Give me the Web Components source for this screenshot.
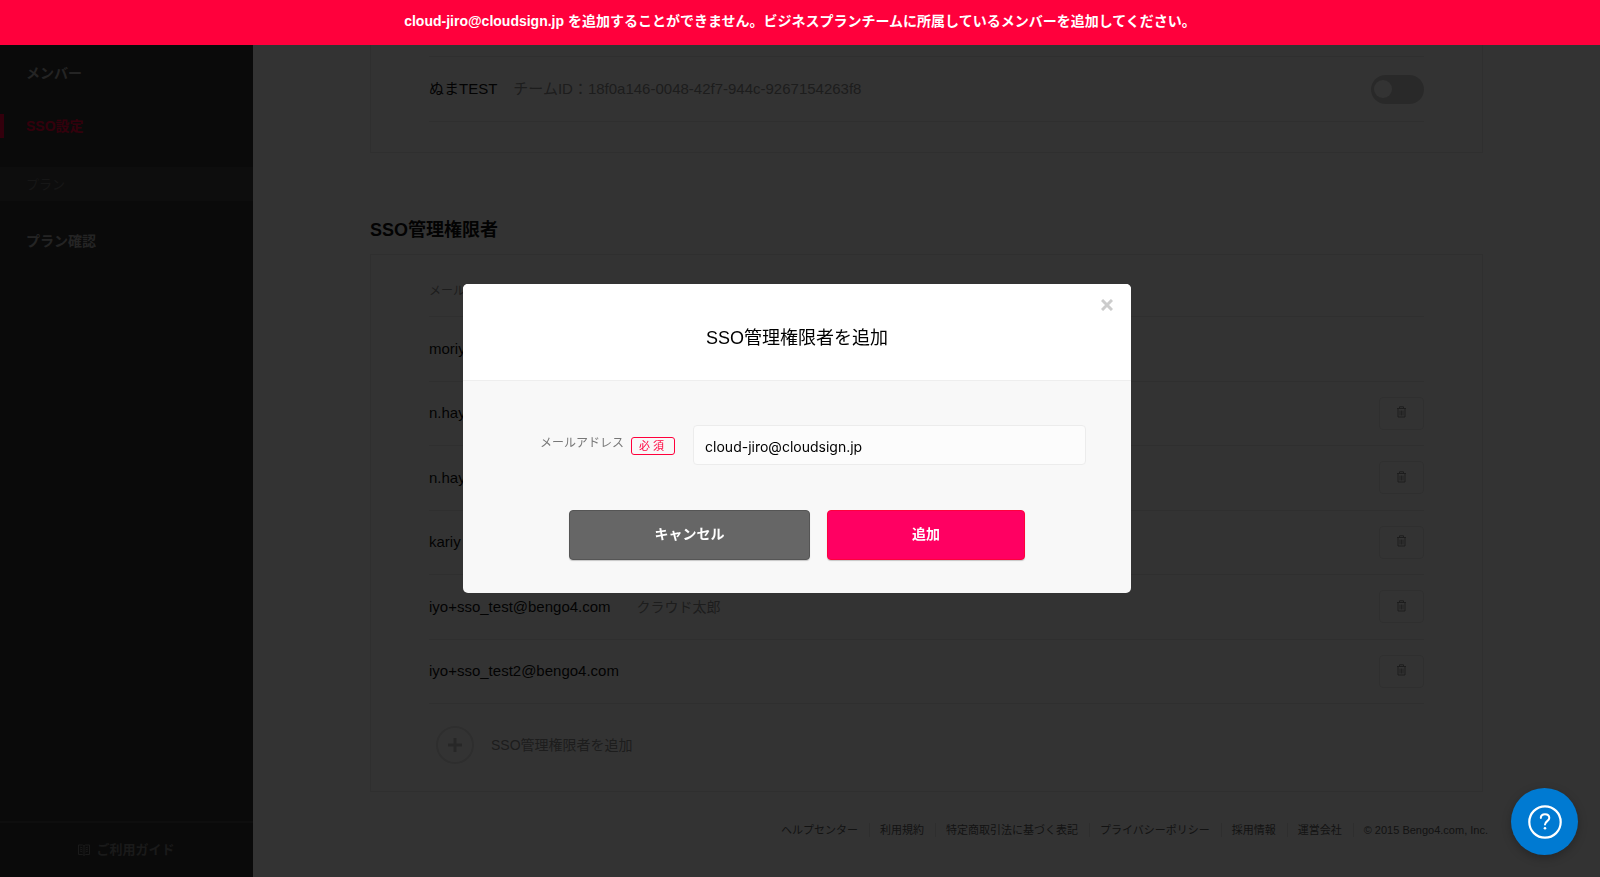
<!DOCTYPE html>
<html lang="ja">
<head>
  <meta charset="UTF-8">
  <meta name="viewport" content="width=device-width, initial-scale=1.0">
  <title>SSO設定</title>
  <style>
    body {
      margin: 0;
      font-family: "Liberation Sans", "Noto Sans CJK JP", sans-serif;
      font-size: 15px;
      line-height: 24px;
      color: #111;
      background-color: #fff;
    }
  </style>
</head>
<body>
  <sso-page></sso-page>

  <script>
    class ErrorBanner extends HTMLElement {
      constructor() {
        super();
        this.attachShadow({ mode: "open" });
      }

      connectedCallback() {
        this.shadowRoot.innerHTML = /* html */`
        <style>
          :host {
            display: block;
            position: relative;
            z-index: 20;
            padding: 9px 16px 12px;
            background-color: #ff003c;
            color: #fff;
            font-size: 14px;
            font-weight: 700;
            text-align: center;
          }
        </style>
        <div role="alert"><slot></slot></div>`;
      }
    }

    class SideNav extends HTMLElement {
      constructor() {
        super();
        this.attachShadow({ mode: "open" });
      }

      static get styles() {
        return /* css */`
          :host {
            display: flex;
            flex-direction: column;
            width: 253px;
            flex-shrink: 0;
            background-color: #323232;
            font-size: 14px;
            font-weight: 700;
          }

          nav {
            flex: 1;
            padding-top: 16px;
          }

          a {
            display: block;
            color: #b4b4b4;
            text-decoration: none;
          }

          .item {
            padding: 0 26px;
            margin-bottom: 29px;
          }

          .active {
            padding-left: 22px;
            border-left: 4px solid #ff003c;
            color: #ff003c;
          }

          .group {
            margin: 0 0 28px;
            padding: 6px 26px 4px;
            background-color: #414141;
            color: #707070;
            font-size: 13px;
            font-weight: 400;
            line-height: 24px;
          }

          .guide {
            display: flex;
            justify-content: center;
            align-items: center;
            gap: 6px;
            padding: 15px 0;
            border-top: 2px solid #484848;
            color: #808080;
            font-size: 13px;
          }
        `;
      }

      connectedCallback() {
        this.shadowRoot.innerHTML = /* html */`
        <style>${SideNav.styles}</style>
        <nav>
          <a href="#members" class="item">メンバー</a>
          <a href="#sso" class="item active">SSO設定</a>
          <h2 class="group">プラン</h2>
          <a href="#plan" class="item">プラン確認</a>
        </nav>
        <a href="#guide" class="guide">
          <svg width="12" height="12" viewBox="0 0 12 12" fill="none" stroke="currentColor" aria-hidden="true">
            <path d="M.5 1H4.5L6 2 7.5 1H11.5V10.5H7.5L6 11.5 4.5 10.5H.5ZM6 2V11M2 3L4.5 4M2 5L4.5 6M2 7L4.5 8M10 3L7.5 4M10 5L7.5 6M10 7L7.5 8"/>
          </svg>
          ご利用ガイド
        </a>`;
      }
    }

    class PageCard extends HTMLElement {
      constructor() {
        super();
        this.attachShadow({ mode: "open" });
      }

      connectedCallback() {
        this.shadowRoot.innerHTML = /* html */`
        <style>
          :host {
            display: block;
            padding: 0 58px;
            border: 1px solid #e9e9e9;
          }
        </style>
        <slot></slot>`;
      }
    }

    class ToggleSwitch extends HTMLElement {
      constructor() {
        super();
        this.attachShadow({ mode: "open" });
      }

      connectedCallback() {
        this.shadowRoot.innerHTML = /* html */`
        <style>
          :host {
            display: flex;
          }

          input {
            appearance: none;
            display: flex;
            align-items: center;
            box-sizing: border-box;
            width: 53px;
            height: 29px;
            margin: 0;
            padding: 0 3px;
            border-radius: 15px;
            background-color: #ccc;
          }
          input::before {
            content: "";
            width: 18px;
            height: 18px;
            border-radius: 50%;
            background-color: #fcfcfc;
          }
          input:checked {
            justify-content: flex-end;
            background-color: #ff003c;
          }
        </style>
        <input type="checkbox" role="switch" aria-label="${this.getAttribute("label")}">`;
      }
    }

    class MemberRow extends HTMLElement {
      constructor() {
        super();
        this.attachShadow({ mode: "open" });
      }

      static get styles() {
        return /* css */`
          :host {
            display: flex;
            align-items: center;
            justify-content: space-between;
            border-bottom: 1px solid #eaeaea;
          }

          .text {
            display: flex;
            align-items: center;
            gap: var(--row-gap, 26px);
          }

          .sub {
            color: #909090;
            font-size: var(--sub-size, 14px);
          }

          button {
            display: flex;
            justify-content: center;
            align-items: center;
            width: 45px;
            height: 33px;
            padding: 0 0 2px;
            border: 1px solid #e8e8e8;
            border-radius: 4px;
            background-color: #fff;
            color: #909090;
          }
        `;
      }

      connectedCallback() {
        const remove = this.hasAttribute("removable") ? /* html */`
          <button type="button" aria-label="削除">
            <svg width="9" height="12" viewBox="0 0 9 12" fill="none" stroke="currentColor" aria-hidden="true">
              <path d="M0 2.5H9M2.5 2V.8H6.5V2M1 3V11H8V3"/>
              <path stroke-width=".8" d="M3 4.5V9.5M4.5 4.5V9.5M6 4.5V9.5"/>
            </svg>
          </button>` : "";

        this.shadowRoot.innerHTML = /* html */`
        <style>${MemberRow.styles}</style>
        <div class="text">
          <span>${this.getAttribute("name")}</span>
          <span class="sub">${this.getAttribute("sub") || ""}</span>
        </div>
        <slot></slot>
        ${remove}`;
      }
    }

    class AddButton extends HTMLElement {
      constructor() {
        super();
        this.attachShadow({ mode: "open" });
      }

      connectedCallback() {
        this.shadowRoot.innerHTML = /* html */`
        <style>
          :host {
            display: block;
            padding: 22px 7px 27px;
          }

          button {
            display: flex;
            align-items: center;
            gap: 17px;
            padding: 0;
            border: 0;
            background: none;
            color: #909090;
            font: inherit;
            font-size: 14px;
          }
        </style>
        <button type="button">
          <svg width="38" height="38" viewBox="0 0 38 38" fill="none" aria-hidden="true">
            <circle cx="19" cy="19" r="18" stroke="#e4e4e4" stroke-width="2"/>
            <path d="M19 12V26M12 19H26" stroke="#c4c4c4" stroke-width="3"/>
          </svg>
          <slot></slot>
        </button>`;
      }
    }

    class SiteFooter extends HTMLElement {
      constructor() {
        super();
        this.attachShadow({ mode: "open" });
      }

      connectedCallback() {
        const links = ["ヘルプセンター", "利用規約", "特定商取引法に基づく表記", "プライバシーポリシー", "採用情報", "運営会社"];
        this.shadowRoot.innerHTML = /* html */`
        <style>
          :host {
            display: flex;
            justify-content: flex-end;
            padding: 31px 112px 0 0;
            font-size: 11px;
            line-height: 14px;
            color: #606060;
          }

          a {
            margin-right: 10px;
            padding-right: 11px;
            border-right: 1px solid #e4e4e4;
            color: inherit;
            text-decoration: none;
          }

          small {
            font-size: inherit;
          }
        </style>
        ${links.map((text) => `<a href="#">${text}</a>`).join("")}
        <small>© 2015 Bengo4.com, Inc.</small>`;
      }
    }

    class AddDialog extends HTMLElement {
      constructor() {
        super();
        this.attachShadow({ mode: "open" });
      }

      static get styles() {
        return /* css */`
          :host {
            position: fixed;
            inset: 0;
            z-index: 10;
            display: flex;
            justify-content: center;
            align-items: center;
            padding-right: 6px;
            background-color: rgba(0, 0, 0, 0.8);
          }

          .dialog {
            position: relative;
            width: 668px;
            border-radius: 5px;
            background-color: #f8f8f8;
            overflow: hidden;
          }

          h1 {
            margin: 0;
            padding: 42px 0 30px;
            border-bottom: 1px solid #eee;
            background-color: #fff;
            color: #000;
            font-size: 18px;
            font-weight: 400;
            text-align: center;
          }

          .close {
            position: absolute;
            top: 15px;
            right: 18px;
            display: flex;
            padding: 0;
            border: 0;
            background: none;
          }

          form {
            padding: 44px 45px 33px 77px;
          }

          .field {
            display: flex;
            align-items: center;
            gap: 18px;
          }

          label {
            display: flex;
            align-items: flex-start;
            gap: 7px;
            color: #777;
            font-size: 12px;
            line-height: 16px;
          }

          .required {
            margin-top: 2px;
            padding: 0 10px 0 7px;
            border: 1px solid #ff003c;
            border-radius: 3px;
            color: #ff003c;
            font-size: 11px;
          }

          input {
            flex: 1;
            min-width: 0;
            box-sizing: border-box;
            height: 40px;
            padding: 3px 11px 0;
            border: 1px solid #ececec;
            border-radius: 4px;
            background-color: #fcfcfc;
            color: #000;
            font-family: Inter, sans-serif;
            font-size: 14px;
          }

          /* the pair of buttons is centred on the dialog, not on the padded form */
          .actions {
            display: flex;
            justify-content: center;
            gap: 17px;
            margin: 45px 0 0 -32px;
          }

          .actions button {
            width: 198px;
            height: 50px;
            padding: 0 0 2px;
            border: 1px solid #ff003c;
            border-radius: 4px;
            background-color: #ff0062;
            box-shadow: 0 1px 1px rgba(0, 0, 0, 0.2);
            color: #fff;
            font: inherit;
            font-size: 14px;
            font-weight: 700;
          }
          .actions .cancel {
            width: 241px;
            border-color: #555;
            background-color: #666;
          }
        `;
      }

      connectedCallback() {
        this.shadowRoot.innerHTML = /* html */`
        <style>${AddDialog.styles}</style>
        <div class="dialog" role="dialog" aria-labelledby="title">
          <h1 id="title">SSO管理権限者を追加</h1>
          <button type="button" class="close" aria-label="閉じる">
            <svg width="12" height="12" viewBox="0 0 12 12" stroke="#ccc" stroke-width="3" aria-hidden="true">
              <path d="M1 1L11 11M11 1L1 11"/>
            </svg>
          </button>
          <form>
            <div class="field">
              <label for="mail">メールアドレス<span class="required">必 須</span></label>
              <input id="mail" type="text" value="cloud-jiro@cloudsign.jp">
            </div>
            <div class="actions">
              <button type="button" class="cancel">キャンセル</button>
              <button type="button">追加</button>
            </div>
          </form>
        </div>`;
      }
    }

    class HelpButton extends HTMLElement {
      constructor() {
        super();
        this.attachShadow({ mode: "open" });
      }

      connectedCallback() {
        this.shadowRoot.innerHTML = /* html */`
        <style>
          :host {
            position: fixed;
            right: 22px;
            bottom: 22px;
            z-index: 30;
          }

          button {
            display: flex;
            justify-content: center;
            align-items: center;
            width: 67px;
            height: 67px;
            padding: 0;
            border: 0;
            border-radius: 50%;
            background-color: #007ad2;
            box-shadow: 0 3px 10px rgba(0, 0, 0, 0.25);
          }
        </style>
        <button type="button" aria-label="ヘルプ">
          <svg width="34" height="34" viewBox="0 0 34 34" fill="none" stroke="#fff" aria-hidden="true">
            <circle cx="17" cy="17" r="15.7" stroke-width="2.2"/>
            <path stroke-width="2" stroke-linecap="round" d="M12.8 12.9C12.9 10.5 14.6 9.3 17 9.3S21.3 10.7 21.3 13C21.3 15.9 17 16.4 17 19.6"/>
            <circle cx="17" cy="23.3" r="1.3" fill="#fff" stroke="none"/>
          </svg>
        </button>`;
      }
    }

    class SsoPage extends HTMLElement {
      constructor() {
        super();
        this.attachShadow({ mode: "open" });
      }

      static get styles() {
        return /* css */`
          :host {
            display: flex;
            flex-direction: column;
            min-height: 100vh;
          }

          .layout {
            display: flex;
            flex: 1;
          }

          .content {
            flex: 1;
            min-width: 0;
          }

          main {
            padding: 0 117px;
          }

          .teams {
            padding-top: 11px;
            padding-bottom: 30px;
            border-top: 0;
          }
          .teams member-row {
            --row-gap: 16px;
            --sub-size: 15px;
            height: 64px;
            border-top: 1px solid #eaeaea;
          }

          h2 {
            margin: 65px 0 12px;
            font-size: 18px;
            font-weight: 700;
          }

          .head {
            padding: 24px 0 13px;
            border-bottom: 1px solid #eaeaea;
            color: #909090;
            font-size: 12px;
          }

          .rows {
            display: grid;
            grid-auto-rows: 1fr;
            height: 387px;
          }
        `;
      }

      connectedCallback() {
        this.shadowRoot.innerHTML = /* html */`
        <style>${SsoPage.styles}</style>
        <error-banner>cloud-jiro@cloudsign.jp を追加することができません。ビジネスプランチームに所属しているメンバーを追加してください。</error-banner>
        <div class="layout">
          <side-nav></side-nav>
          <div class="content">
            <main>
              <page-card class="teams">
                <member-row name="ぬまTEST" sub="チームID：18f0a146-0048-42f7-944c-9267154263f8">
                  <toggle-switch label="ぬまTEST"></toggle-switch>
                </member-row>
              </page-card>
              <h2>SSO管理権限者</h2>
              <page-card>
                <div class="head">メール</div>
                <div class="rows">
                  <member-row name="moriy"></member-row>
                  <member-row name="n.hay" removable></member-row>
                  <member-row name="n.hay" removable></member-row>
                  <member-row name="kariy" removable></member-row>
                  <member-row name="iyo+sso_test@bengo4.com" sub="クラウド太郎" removable></member-row>
                  <member-row name="iyo+sso_test2@bengo4.com" removable></member-row>
                </div>
                <add-button>SSO管理権限者を追加</add-button>
              </page-card>
            </main>
            <site-footer></site-footer>
          </div>
        </div>
        <add-dialog></add-dialog>
        <help-button></help-button>`;
      }
    }

    customElements.define("error-banner", ErrorBanner);
    customElements.define("side-nav", SideNav);
    customElements.define("page-card", PageCard);
    customElements.define("toggle-switch", ToggleSwitch);
    customElements.define("member-row", MemberRow);
    customElements.define("add-button", AddButton);
    customElements.define("site-footer", SiteFooter);
    customElements.define("add-dialog", AddDialog);
    customElements.define("help-button", HelpButton);
    customElements.define("sso-page", SsoPage);
  </script>
</body>
</html>
